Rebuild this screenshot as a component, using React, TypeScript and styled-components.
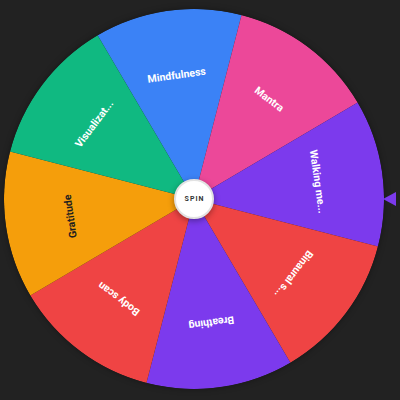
import React from 'react';
import styled, { createGlobalStyle } from 'styled-components';

const GlobalStyle = createGlobalStyle`
  html, body {
    margin: 0;
    padding: 0;
    background: #222222;
  }
`;

const Page = styled.div`
  width: 400px;
  height: 400px;
  background: #222222;
  padding: 9px 0 0 4px;
  box-sizing: border-box;
  font-family: Roboto, "Liberation Sans", sans-serif;
`;

const WheelWrap = styled.div`
  position: relative;
  width: 380px;
  height: 380px;
`;

const WheelSvg = styled.svg`
  display: block;
  border-radius: 50%;
  box-shadow: 0 0 6px rgba(0, 0, 0, 0.35);
`;

const SpinButton = styled.button`
  position: absolute;
  left: 50%;
  top: 50%;
  width: 40px;
  height: 40px;
  margin: -20px 0 0 -20px;
  border-radius: 50%;
  border: 2px solid #e2e2e2;
  background: #ffffff;
  box-shadow: 0 2px 6px rgba(0, 0, 0, 0.35);
  color: #333333;
  font-family: Roboto, "Liberation Sans", sans-serif;
  font-size: 7px;
  font-weight: 700;
  letter-spacing: 1px;
  padding: 0 0 0 1px;
  cursor: pointer;
`;

const Pointer = styled.div`
  position: absolute;
  right: -12px;
  top: 50%;
  margin-top: -7px;
  width: 0;
  height: 0;
  border-top: 7px solid transparent;
  border-bottom: 7px solid transparent;
  border-right: 13px solid #7c3aed;
`;

interface ISegment {
  label: string;
  color: string;
  text: string;
}

const segments: ISegment[] = [
  { label: 'Mindfulness', color: '#3b82f6', text: '#ffffff' },
  { label: 'Mantra', color: '#ec4899', text: '#ffffff' },
  { label: 'Walking meditation', color: '#7c3aed', text: '#ffffff' },
  { label: 'Binaural sounds', color: '#ef4444', text: '#ffffff' },
  { label: 'Breathing', color: '#7c3aed', text: '#ffffff' },
  { label: 'Body scan', color: '#ef4444', text: '#ffffff' },
  { label: 'Gratitude', color: '#f59e0b', text: '#1f1f1f' },
  { label: 'Visualization', color: '#10b981', text: '#ffffff' },
];

const SIZE = 380;
const C = SIZE / 2;
const R = SIZE / 2;
const TEXT_R = 125;
const OFFSET = -8; // wheel rotation, degrees clockwise from top

const point = (deg: number, r: number) => {
  const rad = (deg * Math.PI) / 180;
  return [C + r * Math.sin(rad), C - r * Math.cos(rad)];
};

const shorten = (s: string) => (s.length > 11 ? s.slice(0, 10) + '...' : s);

const App: React.FC = () => {
  const step = 360 / segments.length;

  return (
    <>
      <GlobalStyle />
      <Page>
        <WheelWrap>
          <WheelSvg width={SIZE} height={SIZE} viewBox={`0 0 ${SIZE} ${SIZE}`}>
            {segments.map((seg, i) => {
              const mid = OFFSET + i * step;
              const [x1, y1] = point(mid - step / 2, R);
              const [x2, y2] = point(mid + step / 2, R);
              const [tx, ty] = point(mid, TEXT_R);
              return (
                <g key={i}>
                  <path
                    d={`M ${C} ${C} L ${x1} ${y1} A ${R} ${R} 0 0 1 ${x2} ${y2} Z`}
                    fill={seg.color}
                  />
                  <text
                    x={tx}
                    y={ty}
                    fill={seg.text}
                    fontSize={10.5}
                    fontWeight={700}
                    fontFamily='Roboto, "Liberation Sans", sans-serif'
                    textAnchor="middle"
                    dominantBaseline="central"
                    transform={`rotate(${mid} ${tx} ${ty})`}
                  >
                    {shorten(seg.label)}
                  </text>
                </g>
              );
            })}
          </WheelSvg>
          <SpinButton>SPIN</SpinButton>
          <Pointer />
        </WheelWrap>
      </Page>
    </>
  );
};

export default App;
